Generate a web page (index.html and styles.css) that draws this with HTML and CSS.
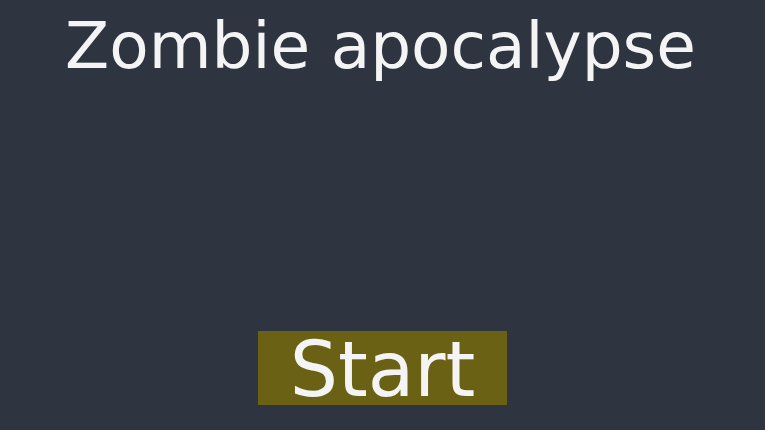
FILE: index.html
```html
<!DOCTYPE html>
<html lang="en">
<head>
    <meta charset="UTF-8">
    <meta name="viewport" content="width=device-width, initial-scale=1.0">
    <title>Zombie apocalypse</title>
    <link rel="stylesheet" href="styles.css">
</head>
<body>
    <div class="screen">
        <h1 class="title">Zombie apocalypse</h1>
        <button class="start-btn">Start</button>
    </div>
</body>
</html>
```

FILE: styles.css
```css
html, body {
    margin: 0;
    padding: 0;
    height: 100%;
}

body {
    background-color: #2e3440;
    color: #eceff4;
    font-family: "DejaVu Sans", sans-serif;
    overflow: hidden;
}

.screen {
    display: flex;
    flex-direction: column;
    align-items: center;
    padding-top: 8px;
}

.title {
    margin: 0 4px 0 0;
    font-size: 64.5px;
    font-weight: normal;
    line-height: normal;
    color: #f4f4f4;
}

.start-btn {
    margin-top: 248px;
    box-sizing: border-box;
    background-color: #6b6115;
    color: #f4f4f4;
    border: none;
    border-radius: 0;
    width: 249px;
    height: 74px;
    padding: 4px 0 0;
    font-family: inherit;
    font-size: 76px;
    line-height: 70px;
    cursor: pointer;
}
```
